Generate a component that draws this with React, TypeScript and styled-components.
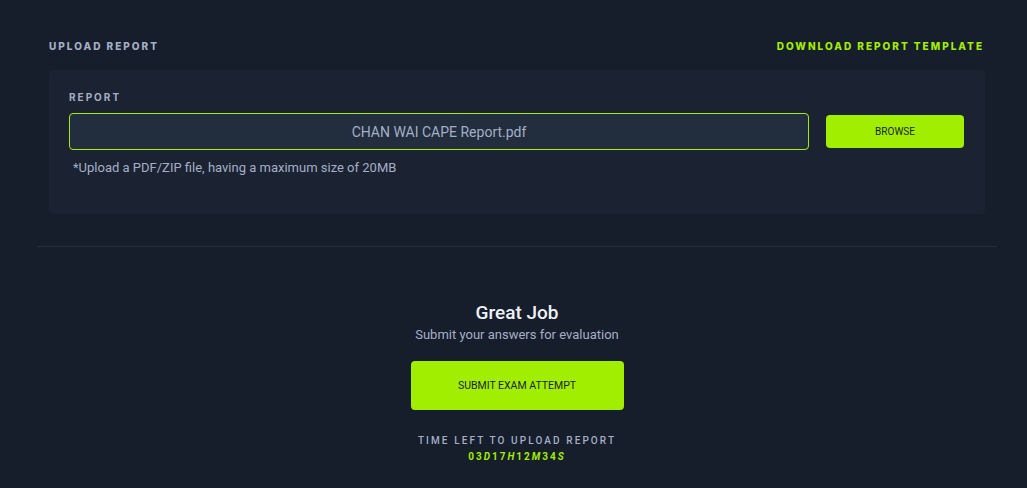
import React from 'react'
import styled, { createGlobalStyle } from 'styled-components'

const GlobalStyle = createGlobalStyle`
  body {
    margin: 0;
    background: #161d2b;
    font-family: Roboto, 'Noto Sans', sans-serif;
  }
`

const App = () => {
  return (
    <>
      <GlobalStyle />
      <Page>
        <Section>
          <HeaderRow>
            <Heading>Upload Report</Heading>
            <TemplateLink>Download Report Template</TemplateLink>
          </HeaderRow>
          <Card>
            <FieldLabel>Report</FieldLabel>
            <UploadRow>
              <FileBox>CHAN WAI CAPE Report.pdf</FileBox>
              <BrowseButton>BROWSE</BrowseButton>
            </UploadRow>
            <Hint>*Upload a PDF/ZIP file, having a maximum size of 20MB</Hint>
          </Card>
        </Section>
        <Divider />
        <SubmitArea>
          <Title>Great Job</Title>
          <Subtitle>Submit your answers for evaluation</Subtitle>
          <SubmitButton>SUBMIT EXAM ATTEMPT</SubmitButton>
          <TimeLabel>Time left to upload report</TimeLabel>
          <Countdown>
            03<Unit>D</Unit>17<Unit>H</Unit>12<Unit>M</Unit>34<Unit>S</Unit>
          </Countdown>
        </SubmitArea>
      </Page>
    </>
  )
}

const Page = styled.main`
  width: 960px;
  margin-left: 37px;
  padding-top: 40px;
`

const Section = styled.section`
  padding: 0 12px;
`

const HeaderRow = styled.div`
  display: flex;
  justify-content: space-between;
  align-items: center;

  height: 12px;
  padding-right: 1px;
`

const Heading = styled.h2`
  margin: 0;

  font-family: Inter, sans-serif;
  font-size: 10px;
  font-weight: 800;
  line-height: 12px;
  letter-spacing: 2px;
  text-transform: uppercase;
  color: #a4afc6;
`

const TemplateLink = styled(Heading)`
  color: #a2ee00;
  cursor: pointer;
`

const Card = styled.div`
  margin-top: 18px;
  padding: 20px 21px 37px 20px;

  background: #1b2231;
  border-radius: 4px;
`

const FieldLabel = styled.div`
  font-family: Inter, sans-serif;
  font-size: 10px;
  font-weight: 700;
  line-height: 14px;
  letter-spacing: 2px;
  text-transform: uppercase;
  color: #a4afc6;
`

const UploadRow = styled.div`
  display: flex;
  align-items: center;
  gap: 17px;

  margin-top: 9px;
`

const FileBox = styled.div`
  flex: 1;
  display: flex;
  align-items: center;
  justify-content: center;

  height: 35px;

  background: #222d3e;
  border: 1px solid #a2ee00;
  border-radius: 4px;

  font-size: 14px;
  color: #a4afc6;
`

const BrowseButton = styled.button`
  width: 138px;
  height: 33px;

  background: #a2ee00;
  border: none;
  border-radius: 4px;

  font-family: Roboto, sans-serif;
  font-size: 10px;
  color: #1b2331;
`

const Hint = styled.p`
  margin: 9px 0 0 4px;

  font-size: 13px;
  line-height: 18px;
  color: #a4afc6;
`

const Divider = styled.hr`
  margin: 32px 0 0;

  border: none;
  border-top: 1px solid #252e3d;
`

const SubmitArea = styled.section`
  display: flex;
  flex-direction: column;
  align-items: center;

  padding-top: 54px;
`

const Title = styled.h1`
  margin: 0;

  font-size: 19px;
  font-weight: 500;
  line-height: 24px;
  color: #eef1f6;
`

const Subtitle = styled.p`
  margin: 1px 0 0;

  font-size: 13px;
  line-height: 18px;
  color: #a4afc6;
`

const SubmitButton = styled.button`
  width: 213px;
  height: 49px;
  margin-top: 17px;

  background: #a2ee00;
  border: none;
  border-radius: 4px;

  font-family: Roboto, sans-serif;
  font-size: 10.5px;
  color: #1b2331;
`

const TimeLabel = styled.div`
  margin-top: 24px;

  font-family: Roboto, sans-serif;
  font-size: 10px;
  font-weight: 500;
  line-height: 14px;
  letter-spacing: 2.1px;
  text-transform: uppercase;
  color: #a4afc6;
`

const Countdown = styled.div`
  margin-top: 2px;

  font-family: Roboto, sans-serif;
  font-size: 10px;
  font-weight: 700;
  line-height: 14px;
  letter-spacing: 2px;
  color: #a2ee00;
`

const Unit = styled.span`
  font-style: italic;
`

export default App
